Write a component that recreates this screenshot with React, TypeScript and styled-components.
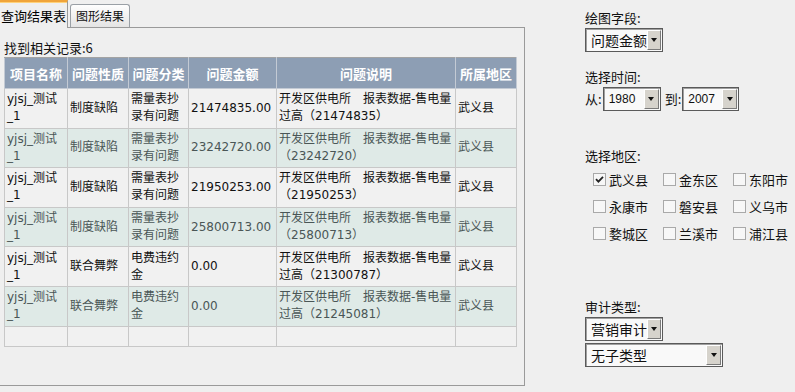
import React from 'react';
import styled, { createGlobalStyle } from 'styled-components';

const GlobalStyle = createGlobalStyle`
  html, body {
    margin: 0;
    padding: 0;
    background: #efefef;
  }
  body {
    font-family: "DejaVu Sans", "Noto Sans CJK SC", sans-serif;
    font-size: 12px;
    color: #111;
  }
`;

const Page = styled.div`
  display: flex;
  align-items: flex-start;
`;

const LeftPane = styled.div`
  width: 525px;
  display: flex;
  flex-direction: column;
`;

const TabBar = styled.div`
  display: flex;
  align-items: flex-end;
  height: 28px;
  margin-bottom: -1px;
  position: relative;
  z-index: 1;
`;

const Tab = styled.div<{ $active?: boolean }>`
  box-sizing: border-box;
  font-family: "Noto Sans CJK SC", sans-serif;
  text-align: center;
  ${(p) =>
    p.$active
      ? `
    width: 68px;
    height: 28px;
    padding-top: 4px;
    font-size: 13px;
    line-height: 20px;
    background: #efefef;
    border-top: 2px solid #f0a43a;
    box-shadow: inset 0 1px 0 #ffd27a;
    border-right: 1px solid #9a9a9a;
    color: #000;
  `
      : `
    width: 60px;
    height: 23px;
    margin-left: 2px;
    margin-bottom: 1px;
    font-size: 12px;
    line-height: 21px;
    border: 1px solid #9aa0a6;
    border-bottom: none;
    border-radius: 3px 3px 0 0;
    background: linear-gradient(#fefefe, #e4e4e4);
    color: #111;
  `}
`;

const Panel = styled.div`
  box-sizing: border-box;
  width: 525px;
  height: 359px;
  border: 1px solid #9a9a9a;
  border-left: none;
  padding: 10px 0 0 4px;
`;

const Summary = styled.div`
  font-family: "Noto Sans CJK SC", sans-serif;
  font-size: 13px;
  line-height: 19px;
`;

const ResultTable = styled.table`
  width: 512px;
  table-layout: fixed;
  border-collapse: collapse;
  border: 1px solid #a3a3a3;
`;

const HeadCell = styled.th`
  height: 30px;
  padding: 0;
  background: #8d9eb4;
  color: #fff;
  font-family: "Noto Sans CJK SC", sans-serif;
  font-size: 13px;
  font-weight: bold;
  text-align: center;
  border: 1px solid #c3cad4;
  border-top-color: #a3a3a3;
`;

const Row = styled.tr<{ $alt?: boolean }>`
  background: ${(p) => (p.$alt ? '#dfeae7' : '#f1f1f1')};
  color: ${(p) => (p.$alt ? '#4a5656' : '#111')};
`;

const Cell = styled.td<{ $empty?: boolean }>`
  height: ${(p) => (p.$empty ? '19px' : '38.6px')};
  padding: 0 1px 0 2px;
  font-size: 12px;
  line-height: 17px;
  vertical-align: middle;
  text-align: left;
  border: 1px solid #c8c8c8;
  overflow: hidden;
`;

const Line = styled.div`
  white-space: nowrap;
`;

const SidePane = styled.div`
  margin-left: 60px;
  padding-top: 10px;
  display: flex;
  flex-direction: column;
  font-family: "Noto Sans CJK SC", sans-serif;
  font-size: 13px;
`;

const Label = styled.div<{ $top?: number }>`
  line-height: 16px;
  margin-top: ${(p) => p.$top ?? 0}px;
  margin-bottom: 2px;
  color: #111;
`;

const SelectBox = styled.div<{ $w: number; $size?: number }>`
  box-sizing: border-box;
  display: flex;
  align-items: stretch;
  width: ${(p) => p.$w}px;
  height: 24px;
  padding: 1px;
  border: 1px solid #5a5a5a;
  box-shadow: inset 1px 1px 0 #a0a0a0;
  background: #f9f9f9;
  font-size: ${(p) => p.$size ?? 14}px;
`;

const SelectText = styled.div<{ $latin?: boolean }>`
  flex: 1;
  padding-left: 4px;
  line-height: 20px;
  white-space: nowrap;
  font-family: ${(p) =>
    p.$latin ? '"Liberation Sans", sans-serif' : '"Noto Sans CJK SC", sans-serif'};
`;

const DropButton = styled.div`
  box-sizing: border-box;
  width: 15px;
  background: #d6d3cc;
  border: 1px solid;
  border-color: #fff #7a7a7a #7a7a7a #fff;
  display: flex;
  align-items: center;
  justify-content: center;

  &::after {
    content: '';
    border-top: 4px solid #111;
    border-left: 3.5px solid transparent;
    border-right: 3.5px solid transparent;
  }
`;

const YearRow = styled.div`
  display: flex;
  align-items: center;
  line-height: 16px;
`;

const RangeWord = styled.span<{ $gap?: number }>`
  margin-left: ${(p) => p.$gap ?? 0}px;
  margin-right: 1px;
`;

const CheckGrid = styled.div`
  display: grid;
  grid-template-columns: repeat(3, 70px);
  grid-auto-rows: 27px;
  padding-left: 8px;
`;

const CheckItem = styled.label`
  display: flex;
  align-items: center;
  gap: 3px;
  color: #111;
`;

const Box = styled.span`
  box-sizing: border-box;
  width: 13px;
  height: 13px;
  border: 1px solid #a9a9a9;
  background: #f7f7f7;
  display: flex;
  align-items: center;
  justify-content: center;
`;

const SelectGap = styled.div`
  height: 2px;
`;

const Select = ({
  w,
  value,
  size,
  latin,
}: {
  w: number;
  value: string;
  size?: number;
  latin?: boolean;
}) => (
  <SelectBox $w={w} $size={size}>
    <SelectText $latin={latin}>{value}</SelectText>
    <DropButton />
  </SelectBox>
);

const Check = ({ label, checked }: { label: string; checked?: boolean }) => (
  <CheckItem>
    <Box>
      {checked && (
        <svg width="9" height="9" viewBox="0 0 9 9">
          <path d="M1 4.2 L3.4 6.6 L8 1.8" fill="none" stroke="#222" strokeWidth="1.8" />
        </svg>
      )}
    </Box>
    {label}
  </CheckItem>
);

const DESC_HEAD = '开发区供电所　报表数据-售电量';

const rows = [
  { nature: '制度缺陷', category: '需量表抄录有问题', amount: '21474835.00', tail: '过高（21474835）' },
  { nature: '制度缺陷', category: '需量表抄录有问题', amount: '23242720.00', tail: '（23242720）' },
  { nature: '制度缺陷', category: '需量表抄录有问题', amount: '21950253.00', tail: '（21950253）' },
  { nature: '制度缺陷', category: '需量表抄录有问题', amount: '25800713.00', tail: '（25800713）' },
  { nature: '联合舞弊', category: '电费违约金', amount: '0.00', tail: '过高（21300787）' },
  { nature: '联合舞弊', category: '电费违约金', amount: '0.00', tail: '过高（21245081）' },
];

const columns = [
  { title: '项目名称', width: 63 },
  { title: '问题性质', width: 61 },
  { title: '问题分类', width: 60 },
  { title: '问题金额', width: 88 },
  { title: '问题说明', width: 179 },
  { title: '所属地区', width: 61 },
];

const regions = ['武义县', '金东区', '东阳市', '永康市', '磐安县', '义乌市', '婺城区', '兰溪市', '浦江县'];

export default function App() {
  return (
    <>
      <GlobalStyle />
      <Page>
        <LeftPane>
          <TabBar>
            <Tab $active>查询结果表</Tab>
            <Tab>图形结果</Tab>
          </TabBar>
          <Panel>
            <Summary>找到相关记录:6</Summary>
            <ResultTable>
              <colgroup>
                {columns.map((c) => (
                  <col key={c.title} style={{ width: c.width }} />
                ))}
              </colgroup>
              <thead>
                <tr>
                  {columns.map((c) => (
                    <HeadCell key={c.title}>{c.title}</HeadCell>
                  ))}
                </tr>
              </thead>
              <tbody>
                {rows.map((r, i) => (
                  <Row key={i} $alt={i % 2 === 1}>
                    <Cell>
                      <Line>yjsj_测试</Line>
                      <Line>_1</Line>
                    </Cell>
                    <Cell>{r.nature}</Cell>
                    <Cell>{r.category}</Cell>
                    <Cell>{r.amount}</Cell>
                    <Cell>
                      <Line>{DESC_HEAD}</Line>
                      <Line>{r.tail}</Line>
                    </Cell>
                    <Cell>武义县</Cell>
                  </Row>
                ))}
                <Row>
                  {columns.map((c) => (
                    <Cell key={c.title} $empty />
                  ))}
                </Row>
              </tbody>
            </ResultTable>
          </Panel>
        </LeftPane>

        <SidePane>
          <Label>绘图字段:</Label>
          <Select w={78} value="问题金额" />

          <Label $top={17}>选择时间:</Label>
          <YearRow>
            <RangeWord>从:</RangeWord>
            <Select w={58} value="1980" size={12} latin />
            <RangeWord $gap={4}>到:</RangeWord>
            <Select w={57} value="2007" size={12} latin />
          </YearRow>

          <Label $top={37}>选择地区:</Label>
          <CheckGrid>
            {regions.map((r, i) => (
              <Check key={r} label={r} checked={i === 0} />
            ))}
          </CheckGrid>

          <Label $top={52}>审计类型:</Label>
          <Select w={78} value="营销审计" />
          <SelectGap />
          <Select w={138} value="无子类型" />
        </SidePane>
      </Page>
    </>
  );
}
